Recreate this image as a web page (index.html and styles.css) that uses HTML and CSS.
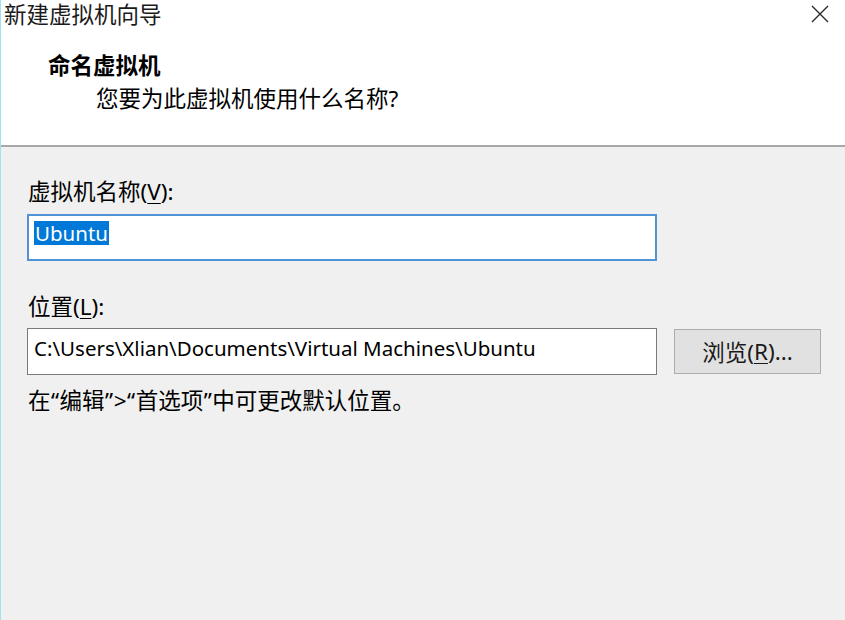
FILE: index.html
```html
<!DOCTYPE html>
<html lang="zh-CN">
<head>
<meta charset="utf-8">
<title>新建虚拟机向导</title>
<link rel="stylesheet" href="styles.css">
</head>
<body>
<div class="window">
  <header class="header">
    <div class="titlebar">
      <span class="title">新建虚拟机向导</span>
      <svg class="close" width="18" height="18" viewBox="0 0 18 18" aria-label="关闭">
        <path d="M1 1 L17 17 M17 1 L1 17" stroke="#2b2b2b" stroke-width="1.4" fill="none"/>
      </svg>
    </div>
    <div class="heading">命名虚拟机</div>
    <div class="subheading">您要为此虚拟机使用什么名称?</div>
  </header>
  <main class="body">
    <div class="label">虚拟机名称(<u>V</u>):</div>
    <div class="field field-focus"><span class="selected">Ubuntu</span></div>
    <div class="label label-2">位置(<u>L</u>):</div>
    <div class="row">
      <div class="field">C:\Users\Xlian\Documents\Virtual Machines\Ubuntu</div>
      <div class="button">浏览(<u>R</u>)...</div>
    </div>
    <div class="hint">在<span class="q">“</span>编辑<span class="q">”</span>&gt;<span class="q">“</span>首选项<span class="q">”</span>中可更改默认位置。</div>
  </main>
</div>
</body>
</html>
```

FILE: styles.css
```css
html, body {
  margin: 0;
  padding: 0;
}
body {
  width: 845px;
  height: 620px;
  overflow: hidden;
  font-family: "Noto Sans", "Noto Sans CJK SC", sans-serif;
  font-size: 22.5px;
  color: #000;
  background: #f0f0f0;
}
.window {
  height: 620px;
  border-left: 1px solid #9fe3f2;
  box-sizing: border-box;
  display: flex;
  flex-direction: column;
}
.header {
  background: #fff;
  height: 145px;
  border-bottom: 2px solid #a8a8a8;
  box-sizing: content-box;
}
.titlebar {
  display: flex;
  justify-content: space-between;
  align-items: flex-start;
  height: 28px;
  padding-top: 1px;
  line-height: 27px;
  padding-left: 3px;
  padding-right: 16px;
  box-sizing: border-box;
}
.title {
  color: #1a1a1a;
}
.close {
  margin-top: 4px;
}
.heading {
  margin-top: 24px;
  padding-left: 47px;
  line-height: 28px;
  font-weight: bold;
}
.subheading {
  margin-top: 5px;
  padding-left: 95px;
  line-height: 28px;
}
.body {
  flex: 1;
  padding: 31px 0 0 26px;
}
.label {
  line-height: 28px;
  padding-left: 1px;
}
.label u, .button u {
  text-decoration-thickness: 1px;
  text-underline-offset: 3px;
}
.field {
  box-sizing: border-box;
  width: 630px;
  height: 47px;
  margin-top: 8px;
  background: #fff;
  border: 1px solid #7a7a7a;
  padding: 3px 6px 0 6px;
  line-height: 30px;
  font-size: 20.5px;
  white-space: nowrap;
}
.field-focus {
  border: 2px solid #4f95d6;
  padding: 2px 5px 0 5px;
}
.selected {
  background: #0078d7;
  color: #fff;
  display: inline-block;
  line-height: 24px;
  padding: 0 1px;
}
.label-2 {
  margin-top: 32px;
}
.row {
  display: flex;
  align-items: flex-start;
  gap: 17px;
  margin-top: 7px;
}
.row .field {
  margin-top: 0;
  padding-top: 4px;
}
.button {
  box-sizing: border-box;
  width: 147px;
  height: 45px;
  margin-top: 1px;
  background: #e1e1e1;
  border: 1px solid #adadad;
  display: flex;
  align-items: center;
  justify-content: center;
  font-size: 22.5px;
  color: #1a1a1a;
}
.hint {
  margin-top: 12px;
  line-height: 28px;
  padding-left: 1px;
}
.q {
  padding: 0 0.5px;
}
```
